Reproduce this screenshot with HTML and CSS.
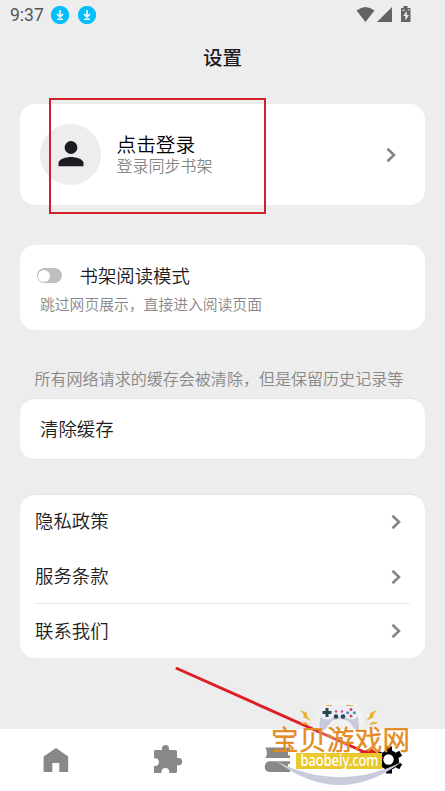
FILE: index.html
```html
<!DOCTYPE html>
<html lang="zh-CN">
<head>
<meta charset="utf-8">
<title>设置</title>
<link rel="stylesheet" href="styles.css">
</head>
<body>
<div class="screen">
  <header class="status">
    <span class="time">9:37</span>
    <svg class="dl" viewBox="0 0 18 18"><circle cx="9" cy="9" r="9.1" fill="#05bdfb"/><path d="M9 4v6.5M6 8l3 3 3-3M6 13.2h6" fill="none" stroke="#fff" stroke-width="1.6"/></svg>
    <svg class="dl" viewBox="0 0 18 18"><circle cx="9" cy="9" r="9.1" fill="#05bdfb"/><path d="M9 4v6.5M6 8l3 3 3-3M6 13.2h6" fill="none" stroke="#fff" stroke-width="1.6"/></svg>
    <svg class="signals" viewBox="0 0 56 18" fill="#636363">
      <path d="M.5 4.500Q9.500-2.500 18.500 4.500L9.500 16z"/>
      <path d="M36 1v15H21z"/>
      <path d="M47.500 0h4v2h3v14H45V2h2.500z"/>
      <path d="M50.700 5l-3.500 5h2.200v4.500l3.600-5.600h-2.300z" fill="#ededed"/>
      <path d="M46.500 3.500h2v1.500h-2zM51.800 3.300h2v1.200h-2z" fill="#c9c9c9"/>
    </svg>
  </header>
  <h1 class="title">设置</h1>
  <main>
    <section class="card account">
      <div class="avatar"><svg viewBox="0 0 26 26" fill="#1d1b22"><circle cx="13" cy="6.500" r="6.400"/><path d="M.5 25.200V22C.5 18 8.500 16 13 16s12.500 2 12.500 6v3.200z"/></svg></div>
      <div class="who"><div class="login">点击登录</div><div class="sync">登录同步书架</div></div>
      <svg class="chev" viewBox="0 0 10 16"><path d="M1.500 1.700L8 8l-6.500 6.300"/></svg>
    </section>
    <section class="card mode">
      <div class="mode-row"><span class="toggle"></span><span class="label">书架阅读模式</span></div>
      <div class="note">跳过网页展示，直接进入阅读页面</div>
    </section>
    <p class="hint">所有网络请求的缓存会被清除，但是保留历史记录等</p>
    <section class="card cache label">清除缓存</section>
    <section class="card links label">
      <div class="row"><span>隐私政策</span><svg class="chev" viewBox="0 0 10 16"><path d="M1.500 1.700L8 8l-6.500 6.300"/></svg></div>
      <div class="row ruled"><span>服务条款</span><svg class="chev" viewBox="0 0 10 16"><path d="M1.500 1.700L8 8l-6.500 6.300"/></svg></div>
      <div class="row"><span>联系我们</span><svg class="chev" viewBox="0 0 10 16"><path d="M1.500 1.700L8 8l-6.500 6.300"/></svg></div>
    </section>
  </main>
  <nav class="tabs">
    <svg viewBox="0 0 32 32"><path d="M3.600 28V12.500L16 4l12.200 8.500V28H19.300v-9h-7v9z"/></svg>
    <svg viewBox="0 0 32 32"><path d="M3 7.500q0-1.500 1.500-1.500H11V4.500a3.500 3.500 0 0 1 7 0V6h6.500q1.500 0 1.500 1.500V14h1.500a3.500 3.500 0 0 1 0 7.300H26V27.500q0 1.500-1.500 1.500H18.300v-1a3.900 3.900 0 0 0-7.800 0v1H3v-7h1a3.900 3.900 0 0 0 0-7.800H3z"/></svg>
    <svg viewBox="0 0 32 32"><path d="M3.300 3.500H28v2.700h-2v5h2V14H3.300q3.300-5 0-10.500zM28 17.300V20h-2v5.200h2V28H7q-4.300-1-4.300-5.300T7 17.300z"/></svg>
    <svg class="gear" viewBox="0 0 32 32">
      <circle cx="16" cy="16" r="10"/>
      <path class="teeth" d="M16 2.500v27M4.300 9.250l23.400 13.500M4.300 22.750L27.700 9.250"/>
      <circle class="hole" cx="15.500" cy="15.500" r="5.200"/>
    </svg>
  </nav>
  <svg class="overlay" viewBox="0 0 445 791">
    <rect x="50" y="99" width="215" height="114" fill="none" stroke="#cf202b" stroke-width="2"/>
    <path d="M177 668.500L371 755" stroke="#dc1e26" stroke-width="3" stroke-linecap="round"/>
    <path d="M359 753l12-5 14 11z" fill="#dc1e26"/>
    <circle cx="340" cy="722" r="24" fill="#fff" opacity=".25"/>
    <path d="M276 761Q340 809 403 761Q373 777 340 777T276 761z" fill="#c8cbdc"/>
    <g>
      <path d="M326 706h6M346 706h7" stroke="#e7b642" stroke-width="2"/>
      <path d="M323 711Q319 719 319.500 727q1 5 5 3l7-9q8-4 17 0l6 8q5 4 4.500-3 0-8-3-15z" fill="#c9cad9"/>
      <path d="M327 706q-6.500 0-7 6.500 0 7 7 7 4 0 6-2h13q3 2 6 2 7-1 6-8-1-5.500-6-5.500z" fill="#efedf5"/>
      <path d="M327 708v9M322.500 712.500h9" stroke="#294655" stroke-width="3"/>
      <circle cx="336" cy="716.500" r="2.300" fill="#294655"/><circle cx="343" cy="716.500" r="2.300" fill="#294655"/>
      <circle cx="336" cy="711.500" r="1.200" fill="#d34c76"/><circle cx="342" cy="711.500" r="1.200" fill="#d34c76"/>
      <circle cx="351" cy="709.500" r="1.500" fill="#cb4468"/><circle cx="351" cy="716" r="1.500" fill="#d74a50"/><circle cx="347.700" cy="712.800" r="1.500" fill="#448ac0"/><circle cx="354.300" cy="712.800" r="1.500" fill="#31a2aa"/>
      <path d="M300 710l7 3 0 3 4 5-8-4 1-2zM300 723l6-1 3 3-6-1zM377 710l-7 3 0 3-4 5 8-4-1-2zM378 722l-6 0-3 3 6-1z" fill="#e9b233"/>
    </g>
    <text class="brand" x="271" y="749.500" textLength="139">宝贝游戏网</text>
    <rect x="296" y="753" width="86" height="16" fill="#e9c92e"/>
    <text class="domain" x="300.500" y="765.500" textLength="78" lengthAdjust="spacingAndGlyphs">baobeiy.com</text>
  </svg>
</div>
</body>
</html>
```
FILE: styles.css
```css
* { box-sizing: border-box; }
body { margin: 0; background: #ededed; font-family: Roboto, "Noto Sans CJK SC", sans-serif; font-weight: 350; color: #1d1b1f; }
.screen { position: relative; width: 445px; height: 791px; display: flex; flex-direction: column; overflow: hidden; }
.status { height: 30px; padding: 0 33px 0 10px; display: flex; align-items: center; flex: none; }
.time { width: 41px; font-size: 17.500px; line-height: 30px; font-weight: 400; color: #565656; }
.dl { width: 18px; height: 18px; margin-right: 9px; }
.signals { width: 56px; height: 18px; margin-left: auto; }
.title { height: 54px; margin: 0; text-align: center; font-size: 19.500px; line-height: 57px; font-weight: 500; }
main { flex: 1; padding: 20px 20px 0; }
.card { background: #fff; border-radius: 15px; }
.account { height: 101px; padding: 0 29px 0 20px; display: flex; align-items: center; }
.avatar { width: 61px; height: 61px; border-radius: 50%; background: #ededed; display: grid; place-items: center; }
.avatar svg { width: 26px; height: 26px; margin-top: -2px; }
.who { margin-left: 15.500px; flex: 1; padding-top: 1px; }
.login { font-size: 19.700px; line-height: 23px; color: #000; }
.sync { font-size: 16px; line-height: 20px; color: #888; }
.chev { width: 10px; height: 16px; fill: none; stroke: #858585; stroke-width: 2.600; }
.label { font-size: 18.400px; color: #1c1c1f; }
.mode { height: 84.500px; margin-top: 40px; padding: 17px 17px 0; }
.mode-row { display: flex; align-items: center; height: 27px; }
.mode-row .label { margin-top: -2px; }
.toggle { width: 25px; height: 15px; margin-right: 17.500px; border-radius: 8px; background: #bfbfbf; padding: 2px 1px; }
.toggle::before { content: ""; display: block; width: 12px; height: 12px; margin-top: -0.500px; border-radius: 50%; background: #fff; }
.note { margin: 6px 0 0 3px; font-size: 14.800px; line-height: 20px; color: #888; }
.hint { margin: 38.500px 0 0 14.500px; font-size: 16.050px; line-height: 24px; color: #888; white-space: nowrap; }
.cache { height: 62px; margin-top: 6px; padding-left: 20px; line-height: 61px; border: solid #e4e4e4; border-width: 1px 0; }
.links { height: 164px; margin-top: 34px; padding: 0 15px; border-top: 1px solid #e2e2e2; }
.row { height: 54.700px; display: flex; align-items: center; justify-content: space-between; padding-right: 9px; }
.row span { margin-top: -4px; }
.row .chev { margin-top: -1px; }
.ruled { position: relative; }
.ruled::after { content: ""; position: absolute; left: 0; right: 0; bottom: 0; height: 1px; background: #ebebeb; }
.tabs { height: 62px; flex: none; background: #fff; display: grid; grid-template-columns: repeat(4, 1fr); place-items: center; }
.tabs svg { width: 32px; height: 32px; fill: #888; }
.tabs .gear { fill: #000; }
.teeth { stroke: #000; stroke-width: 6; }
.hole { fill: #fff; }
.overlay { position: absolute; inset: 0; width: 445px; height: 791px; pointer-events: none; }
.brand { font: 350 27.500px "Noto Sans CJK SC", sans-serif; fill: #e38a20; stroke: #e38a20; stroke-width: .5px; }
.domain { font: 500 15.500px "Noto Sans", sans-serif; fill: #fff; }
```
